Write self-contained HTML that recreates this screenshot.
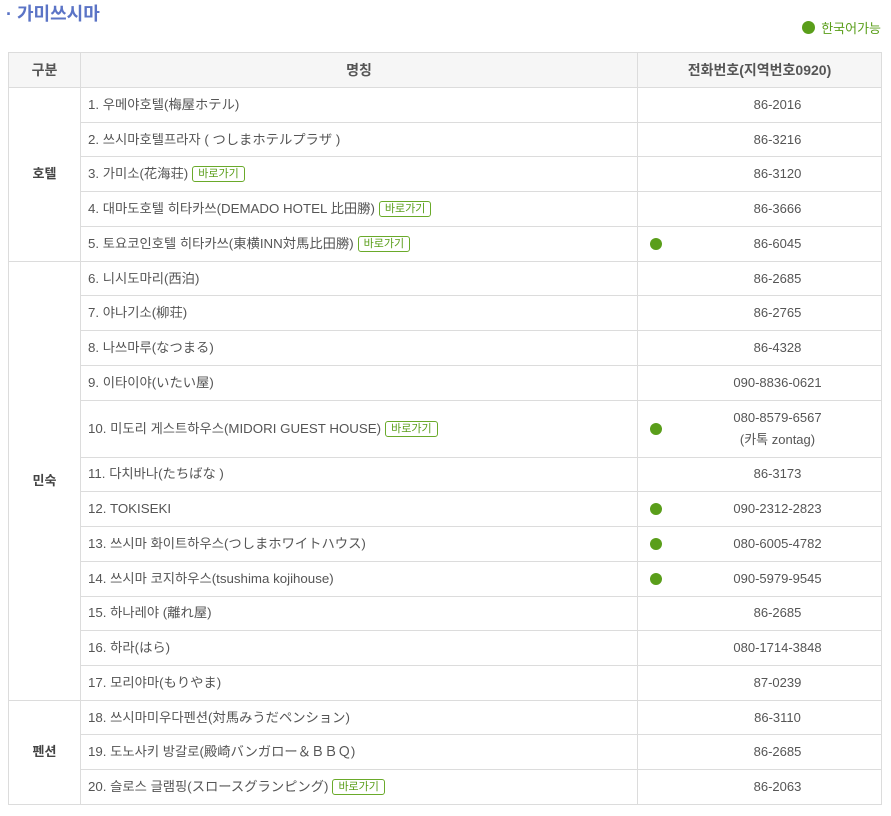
<!DOCTYPE html>
<html><head><meta charset="utf-8">
<style>
body{margin:0;background:#fff;font-family:"Liberation Sans","Noto Sans CJK KR",sans-serif;color:#555;width:891px;height:816px;overflow:hidden;position:relative}
.title{position:absolute;left:6px;top:0px;font-size:18px;font-weight:bold;color:#5b74c6;}
.legend{position:absolute;right:10px;top:18px;font-size:13px;color:#5a9e1a;}
.legend .dot{margin-right:3px;width:13px;height:13px}
.dot{display:inline-block;width:12px;height:12px;border-radius:50%;background:#5a9e1a;vertical-align:-1px;}
table{position:absolute;left:8px;top:52px;width:873px;border-collapse:collapse;table-layout:fixed;font-size:13px;}
td,th{border:1px solid #dcdcdc;padding:0;vertical-align:middle;line-height:18px}
th{background:#f6f6f6;height:34px;font-weight:bold;color:#555;font-size:14px;}
td{height:33.74px;}
td.cat{text-align:center;font-weight:bold;color:#444;}
td.nm{padding-left:7px;font-size:13.3px;}
td.ph{position:relative;text-align:center;padding-left:36px;}
td.ph.two{line-height:22px}
td.ph .dot{position:absolute;left:12px;top:50%;margin-top:-6px;}
.btn{display:inline-block;border:1px solid #6aaa2a;color:#5a9e1a;font-size:11px;line-height:14px;padding:0 5px;border-radius:3px;margin-left:4px;vertical-align:1px;}
</style></head><body>
<div class="title">· 가미쓰시마</div>
<div class="legend"><span class="dot"></span> 한국어가능</div>
<table>
<colgroup><col style="width:72px"><col style="width:557px"><col style="width:244px"></colgroup>
<tr><th>구분</th><th>명칭</th><th>전화번호(지역번호0920)</th></tr>
<tr><td class="cat" rowspan="5">호텔</td><td class="nm">1. 우메야호텔(梅屋ホテル)</td><td class="ph">86-2016</td></tr>
<tr><td class="nm">2. 쓰시마호텔프라자 ( つしまホテルプラザ )</td><td class="ph">86-3216</td></tr>
<tr><td class="nm">3. 가미소(花海荘)<span class="btn">바로가기</span></td><td class="ph">86-3120</td></tr>
<tr><td class="nm">4. 대마도호텔 히타카쓰(DEMADO HOTEL 比田勝)<span class="btn">바로가기</span></td><td class="ph">86-3666</td></tr>
<tr><td class="nm">5. 토요코인호텔 히타카쓰(東横INN対馬比田勝)<span class="btn">바로가기</span></td><td class="ph"><span class="dot"></span>86-6045</td></tr>
<tr><td class="cat" rowspan="12">민숙</td><td class="nm">6. 니시도마리(西泊)</td><td class="ph">86-2685</td></tr>
<tr><td class="nm">7. 야나기소(柳荘)</td><td class="ph">86-2765</td></tr>
<tr><td class="nm">8. 나쓰마루(なつまる)</td><td class="ph">86-4328</td></tr>
<tr><td class="nm">9. 이타이야(いたい屋)</td><td class="ph">090-8836-0621</td></tr>
<tr><td class="nm" style="height:56px">10. 미도리 게스트하우스(MIDORI GUEST HOUSE)<span class="btn">바로가기</span></td><td class="ph two"><span class="dot"></span>080-8579-6567<br>(카톡 zontag)</td></tr>
<tr><td class="nm">11. 다치바나(たちばな )</td><td class="ph">86-3173</td></tr>
<tr><td class="nm">12. TOKISEKI</td><td class="ph"><span class="dot"></span>090-2312-2823</td></tr>
<tr><td class="nm">13. 쓰시마 화이트하우스(つしまホワイトハウス)</td><td class="ph"><span class="dot"></span>080-6005-4782</td></tr>
<tr><td class="nm">14. 쓰시마 코지하우스(tsushima kojihouse)</td><td class="ph"><span class="dot"></span>090-5979-9545</td></tr>
<tr><td class="nm">15. 하나레야 (離れ屋)</td><td class="ph">86-2685</td></tr>
<tr><td class="nm">16. 하라(はら)</td><td class="ph">080-1714-3848</td></tr>
<tr><td class="nm">17. 모리야마(もりやま)</td><td class="ph">87-0239</td></tr>
<tr><td class="cat" rowspan="3">펜션</td><td class="nm">18. 쓰시마미우다펜션(対馬みうだペンション)</td><td class="ph">86-3110</td></tr>
<tr><td class="nm">19. 도노사키 방갈로(殿崎バンガロー＆ＢＢＱ)</td><td class="ph">86-2685</td></tr>
<tr><td class="nm">20. 슬로스 글램핑(スロースグランピング)<span class="btn">바로가기</span></td><td class="ph">86-2063</td></tr>
</table>
</body></html>
